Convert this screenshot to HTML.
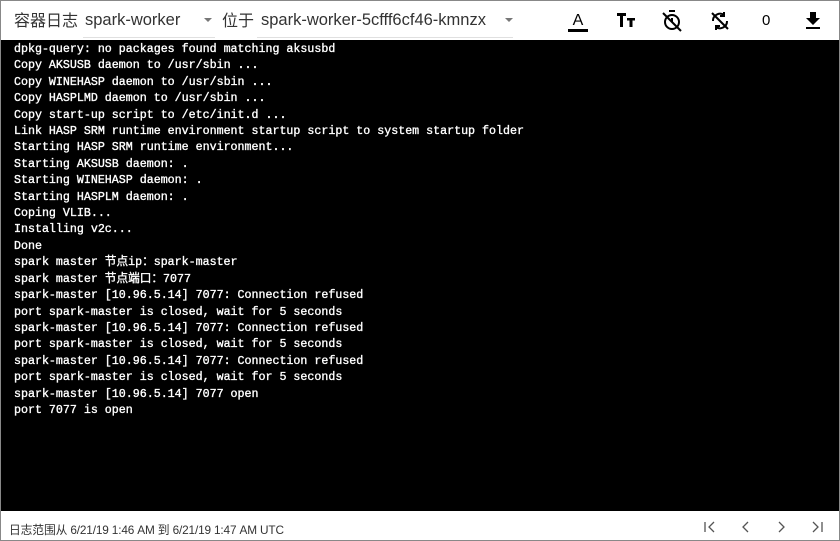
<!DOCTYPE html>
<html><head><meta charset="utf-8"><style>
body{margin:0;width:840px;height:541px;overflow:hidden;background:#fff;font-family:"Liberation Sans","Noto Sans CJK SC",sans-serif;}
.wrap{position:absolute;left:0;top:0;width:838px;height:539px;border:1px solid #888;}
.hdr{position:absolute;left:0;top:0;width:838px;height:39px;background:#fff;}
.t{position:absolute;top:10px;font-size:16.5px;color:#333;white-space:nowrap;}
.ul{position:absolute;top:36px;height:1px;background:#e0e0e0;}
.arr{position:absolute;top:17px;width:0;height:0;border-left:4px solid transparent;border-right:4px solid transparent;border-top:4px solid #777;}
.log{position:absolute;left:0;top:39px;width:838px;height:471px;background:#000;color:#fff;font-family:"Liberation Mono","Noto Sans CJK SC",monospace;font-size:11.65px;line-height:16.4px;padding-top:2px;-webkit-text-stroke:0.35px #fff;}
.log div{padding-left:13px;white-space:pre;}
.ftr{position:absolute;left:0;top:510px;width:838px;height:29px;background:#fff;font-size:11.8px;color:#333;}
.ic{position:absolute;}
</style></head><body><div class="wrap">
<div class="hdr">
<span class="t" style="left:13px;font-size:16px;top:6px">容器日志</span>
<span class="t" style="left:84px">spark-worker</span>
<div class="ul" style="left:82px;width:132px"></div>
<div class="arr" style="left:203px"></div>
<span class="t" style="left:221px;font-size:16px;top:6px">位于</span>
<span class="t" style="left:260px">spark-worker-5cfff6cf46-kmnzx</span>
<div class="ul" style="left:256px;width:256px"></div>
<div class="arr" style="left:504px"></div>
<svg class="ic" style="left:565px;top:8px" width="24" height="24" viewBox="0 0 24 24"><text x="12" y="16" text-anchor="middle" font-size="16" font-family="Liberation Sans" fill="#000">A</text><rect x="2" y="20" width="20" height="3" fill="#000"/></svg>
<svg class="ic" style="left:613px;top:8px" width="24" height="24" viewBox="0 0 24 24"><path d="M3 4h9v3H9v11H6V7H3z M13 9h8v2.5h-2.5V18h-3v-6.5H13z" fill="#000"/></svg>
<svg class="ic" style="left:659px;top:8px" width="24" height="24" viewBox="0 0 24 24" fill="none" stroke="#000" stroke-width="2"><path d="M9 2h6"/><circle cx="12" cy="13" r="7"/><path d="M12 9v4"/><path d="M3 4l18 18"/></svg>
<svg class="ic" style="left:707px;top:8px" width="24" height="24" viewBox="0 0 24 24" fill="none" stroke="#000" stroke-width="2"><path d="M19 12a7 7 0 0 1-11 6M5 12a7 7 0 0 1 11-6"/><path d="M16 3v4h-4M8 21v-4h4" /><path d="M4 4l16 16"/></svg>
<span class="t" style="left:761px;top:11px;font-size:15px;color:#000">0</span>
<svg class="ic" style="left:800px;top:8px" width="24" height="24" viewBox="0 0 24 24"><path d="M19 9h-4V3H9v6H5l7 7zM5 18v2h14v-2z" fill="#000"/></svg>
</div>
<div class="log">
<div>dpkg-query: no packages found matching aksusbd</div>
<div>Copy AKSUSB daemon to /usr/sbin ...</div>
<div>Copy WINEHASP daemon to /usr/sbin ...</div>
<div>Copy HASPLMD daemon to /usr/sbin ...</div>
<div>Copy start-up script to /etc/init.d ...</div>
<div>Link HASP SRM runtime environment startup script to system startup folder</div>
<div>Starting HASP SRM runtime environment...</div>
<div>Starting AKSUSB daemon: .</div>
<div>Starting WINEHASP daemon: .</div>
<div>Starting HASPLM daemon: .</div>
<div>Coping VLIB...</div>
<div>Installing v2c...</div>
<div>Done</div>
<div>spark master 节点ip：spark-master</div>
<div>spark master 节点端口：7077</div>
<div>spark-master [10.96.5.14] 7077: Connection refused</div>
<div>port spark-master is closed, wait for 5 seconds</div>
<div>spark-master [10.96.5.14] 7077: Connection refused</div>
<div>port spark-master is closed, wait for 5 seconds</div>
<div>spark-master [10.96.5.14] 7077: Connection refused</div>
<div>port spark-master is closed, wait for 5 seconds</div>
<div>spark-master [10.96.5.14] 7077 open</div>
<div>port 7077 is open</div>
</div>
<div class="ftr">
<span style="position:absolute;left:8px;top:10px;white-space:nowrap;letter-spacing:-0.15px">日志范围从 6/21/19 1:46 AM 到 6/21/19 1:47 AM UTC</span>
<svg class="ic" style="left:700px;top:8px" width="130" height="16" viewBox="0 0 130 16" fill="none" stroke="#555" stroke-width="1.3"><path d="M4 3v10M13 3l-5 5 5 5"/><path d="M47 3l-5 5 5 5"/><path d="M78 3l5 5-5 5"/><path d="M112 3l5 5-5 5M121 3v10"/></svg>
</div>
</div></body></html>
